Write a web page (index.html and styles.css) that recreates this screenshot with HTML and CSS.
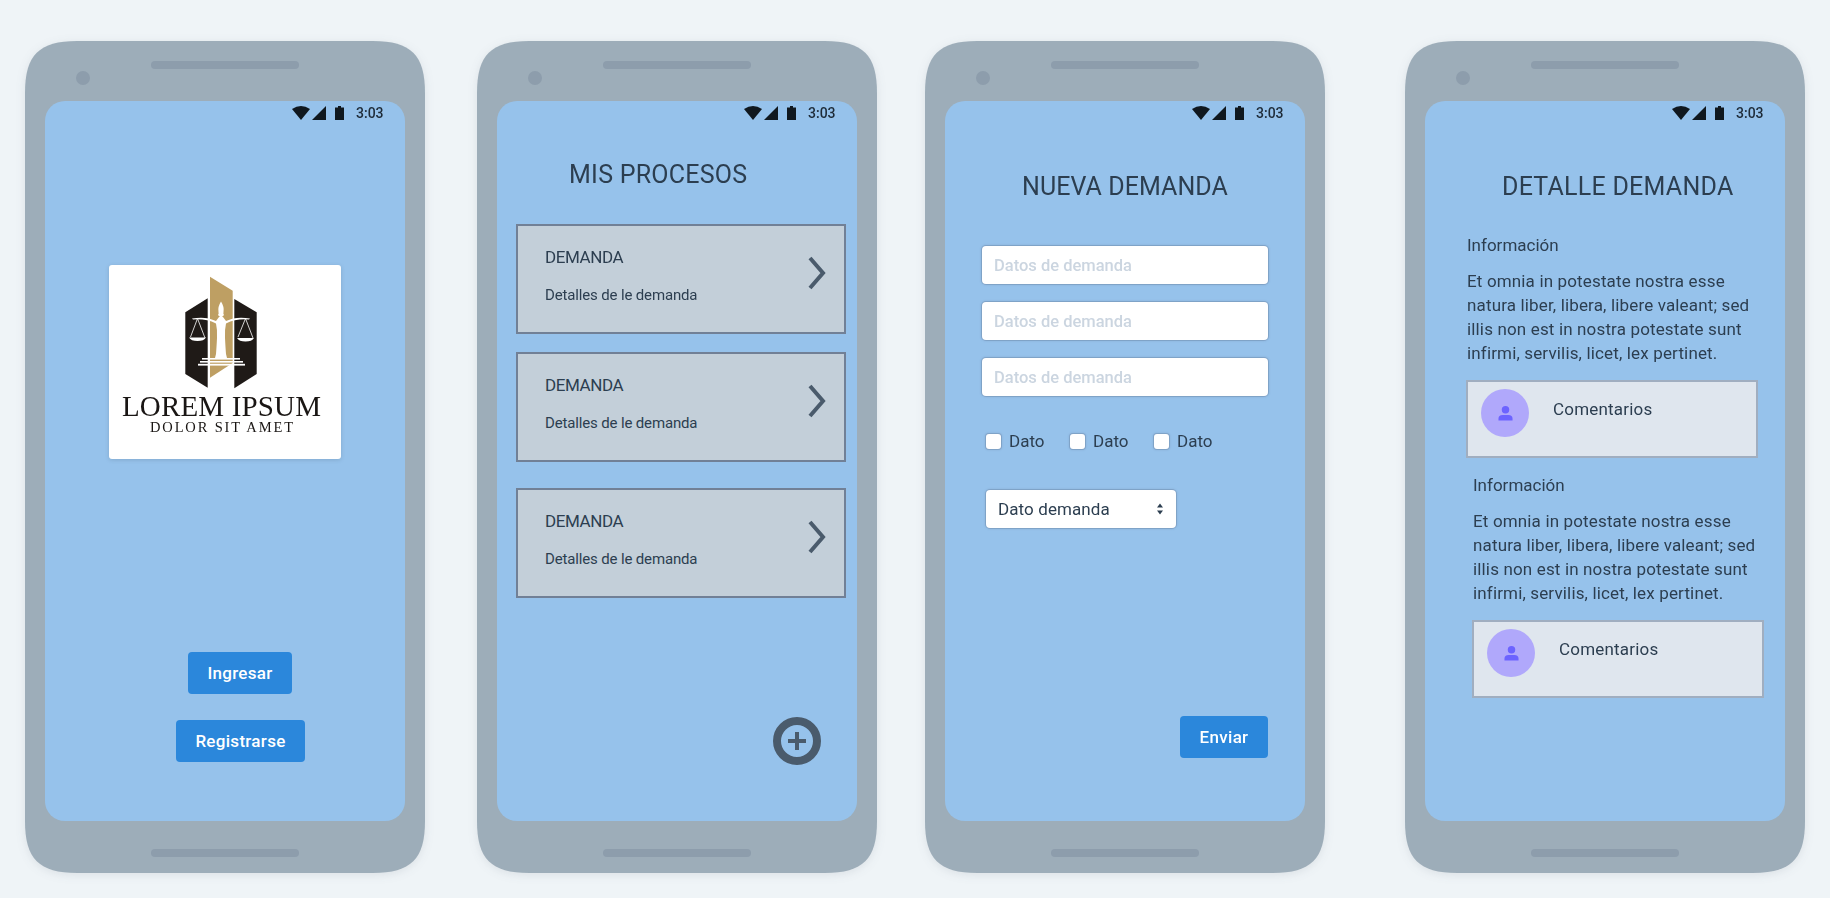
FILE: index.html
```html
<!DOCTYPE html>
<html lang="es">
<head>
<meta charset="utf-8">
<title>Procesos</title>
<link rel="stylesheet" href="styles.css">
</head>
<body>
<main class="board">

  <section class="shell shell-a"><div class="phone">
    <div class="bezel-top"><div class="speaker"></div><div class="camera"></div></div>
    <div class="screen">
      <div class="status">
        <svg class="ic-wifi" viewBox="0 0 18 14"><path d="M0 3Q9-3 18 3L9 14Z"/></svg>
        <svg class="ic-signal" viewBox="0 0 14 14"><path d="M14 0V14H0Z"/></svg>
        <svg class="ic-batt" viewBox="0 0 9 14"><path d="M3 0H6V1.5H9V14H0V1.5H3Z"/></svg>
        <span class="time">3:03</span>
      </div>
      <div class="logo-card">
        <svg class="logo" viewBox="109 265 232 194">
          <polygon class="gold" points="210,276.7 232.7,290.7 232.7,363 210,377.7"/>
          <polygon class="ink" points="207.7,298.3 185.3,312.3 185.3,374 207.7,387.7"/>
          <polygon class="ink" points="234.3,299 256.7,312.3 256.7,374 234.3,388.3"/>
          <path class="wht" d="M221 301.5Q224.5 307 223.5 312Q223 314 224 315L222 317H220L218 315Q219 314 218.5 312Q217.5 307 221 301.5Z"/>
          <path class="wht" d="M219 317H223L226 321Q236 316 250 318.5L249 319.5Q236 318.5 226 323.5Q224.5 330 225 338Q225.5 348 226 354L227 358H215L216 354Q216.5 348 217 338Q217.5 330 216 323.5Q206 318.5 193 319.5L192 318.5Q206 316 216 321Z"/>
          <rect class="wht" x="202" y="358" width="38" height="1.6"/>
          <rect class="wht" x="200" y="361" width="43" height="1.6"/>
          <rect class="wht" x="198" y="363.8" width="47" height="1.8"/>
          <path class="wht-line" d="M197.5 318.5L190.5 337M197.5 318.5L205 338"/>
          <path class="wht-line" d="M245.5 318.5L238 337M245.5 318.5L253 338"/>
          <path class="wht" d="M189 337.5H206Q204 341 197.5 341Q191 341 189 337.5Z"/>
          <path class="wht" d="M237 338H254Q252 341.5 245.5 341.5Q239 341.5 237 338Z"/>
          <text class="logo-big" x="122" y="416" textLength="199" lengthAdjust="spacing">LOREM IPSUM</text>
          <text class="logo-small" x="150" y="431.5" textLength="143" lengthAdjust="spacing">DOLOR SIT AMET</text>
        </svg>
      </div>
      <button class="btn btn-in" type="button">Ingresar</button>
      <button class="btn btn-reg" type="button">Registrarse</button>
    </div>
    <div class="bezel-bottom"><div class="speaker"></div></div>
  </div></section>

  <section class="shell shell-b"><div class="phone">
    <div class="bezel-top"><div class="speaker"></div><div class="camera"></div></div>
    <div class="screen">
      <div class="status">
        <svg class="ic-wifi" viewBox="0 0 18 14"><path d="M0 3Q9-3 18 3L9 14Z"/></svg>
        <svg class="ic-signal" viewBox="0 0 14 14"><path d="M14 0V14H0Z"/></svg>
        <svg class="ic-batt" viewBox="0 0 9 14"><path d="M3 0H6V1.5H9V14H0V1.5H3Z"/></svg>
        <span class="time">3:03</span>
      </div>
      <h1 class="title title-proc">MIS PROCESOS</h1>
      <article class="card card-1">
        <div class="card-text">
          <h2 class="card-title">DEMANDA</h2>
          <p class="card-sub">Detalles de le demanda</p>
        </div>
        <svg class="chev" viewBox="0 0 18 34"><path d="M2 2L15 17L2 32"/></svg>
      </article>
      <article class="card card-2">
        <div class="card-text">
          <h2 class="card-title">DEMANDA</h2>
          <p class="card-sub">Detalles de le demanda</p>
        </div>
        <svg class="chev" viewBox="0 0 18 34"><path d="M2 2L15 17L2 32"/></svg>
      </article>
      <article class="card card-3">
        <div class="card-text">
          <h2 class="card-title">DEMANDA</h2>
          <p class="card-sub">Detalles de le demanda</p>
        </div>
        <svg class="chev" viewBox="0 0 18 34"><path d="M2 2L15 17L2 32"/></svg>
      </article>
      <svg class="fab" viewBox="0 0 48 48"><circle cx="24" cy="24" r="20"/><path d="M24 15V33M15 24H33"/></svg>
    </div>
    <div class="bezel-bottom"><div class="speaker"></div></div>
  </div></section>

  <section class="shell shell-c"><div class="phone">
    <div class="bezel-top"><div class="speaker"></div><div class="camera"></div></div>
    <div class="screen">
      <div class="status">
        <svg class="ic-wifi" viewBox="0 0 18 14"><path d="M0 3Q9-3 18 3L9 14Z"/></svg>
        <svg class="ic-signal" viewBox="0 0 14 14"><path d="M14 0V14H0Z"/></svg>
        <svg class="ic-batt" viewBox="0 0 9 14"><path d="M3 0H6V1.5H9V14H0V1.5H3Z"/></svg>
        <span class="time">3:03</span>
      </div>
      <h1 class="title title-new">NUEVA DEMANDA</h1>
      <form class="form">
        <input class="field" type="text" placeholder="Datos de demanda">
        <input class="field" type="text" placeholder="Datos de demanda">
        <input class="field" type="text" placeholder="Datos de demanda">
        <div class="checks">
          <label class="check"><input class="box" type="checkbox"><span>Dato</span></label>
          <label class="check"><input class="box" type="checkbox"><span>Dato</span></label>
          <label class="check"><input class="box" type="checkbox"><span>Dato</span></label>
        </div>
        <div class="select-wrap">
          <select class="select"><option>Dato demanda</option></select>
          <svg class="select-arrows" viewBox="0 0 8 12"><path d="M4 0.5L7 4.5H1ZM4 11.5L1 7.5H7Z"/></svg>
        </div>
        <button class="btn btn-send" type="button">Enviar</button>
      </form>
    </div>
    <div class="bezel-bottom"><div class="speaker"></div></div>
  </div></section>

  <section class="shell shell-d"><div class="phone">
    <div class="bezel-top"><div class="speaker"></div><div class="camera"></div></div>
    <div class="screen">
      <div class="status">
        <svg class="ic-wifi" viewBox="0 0 18 14"><path d="M0 3Q9-3 18 3L9 14Z"/></svg>
        <svg class="ic-signal" viewBox="0 0 14 14"><path d="M14 0V14H0Z"/></svg>
        <svg class="ic-batt" viewBox="0 0 9 14"><path d="M3 0H6V1.5H9V14H0V1.5H3Z"/></svg>
        <span class="time">3:03</span>
      </div>
      <h1 class="title title-det">DETALLE DEMANDA</h1>
      <div class="info info-1">
        <h2 class="info-head">Información</h2>
        <p class="info-body">Et omnia in potestate nostra esse natura liber, libera, libere valeant; sed illis non est in nostra potestate sunt infirmi, servilis, licet, lex pertinet.</p>
        <div class="comment">
          <div class="avatar"><svg class="person" viewBox="0 0 16 16"><circle cx="8" cy="4.5" r="4"/><path d="M0.5 16V14Q0.5 10 5 10H11Q15.5 10 15.5 14V16Z"/></svg></div>
          <span class="comment-text">Comentarios</span>
        </div>
      </div>
      <div class="info info-2">
        <h2 class="info-head">Información</h2>
        <p class="info-body">Et omnia in potestate nostra esse natura liber, libera, libere valeant; sed illis non est in nostra potestate sunt infirmi, servilis, licet, lex pertinet.</p>
        <div class="comment">
          <div class="avatar"><svg class="person" viewBox="0 0 16 16"><circle cx="8" cy="4.5" r="4"/><path d="M0.5 16V14Q0.5 10 5 10H11Q15.5 10 15.5 14V16Z"/></svg></div>
          <span class="comment-text">Comentarios</span>
        </div>
      </div>
    </div>
    <div class="bezel-bottom"><div class="speaker"></div></div>
  </div></section>

</main>
</body>
</html>
```
FILE: styles.css
```css
* { box-sizing: border-box; }
html, body { margin: 0; padding: 0; height: 100%; }
body {
  background: #eff4f7;
  font-family: Roboto, "Liberation Sans", sans-serif;
  color: #2c3e50;
  overflow: hidden;
}
h1, h2, p { margin: 0; font-weight: 400; }

.board { display: flex; padding: 41px 0 0 25px; }
.shell { flex: none; filter: drop-shadow(0 2px 5px rgba(45, 60, 80, .10)); }
.shell-b { margin-left: 52px; }
.shell-c { margin-left: 48px; }
.shell-d { margin-left: 80px; }
.phone {
  width: 400px;
  height: 832px;
  background: #9dadb9;
  clip-path: path("M0 52C0 14 14 0 52 0H348C386 0 400 14 400 52V780C400 818 386 832 348 832H52C14 832 0 818 0 780Z");
  padding: 0 20px;
}

.bezel-top { height: 60px; padding-top: 20px; }
.bezel-bottom { height: 52px; padding-top: 28px; }
.speaker {
  width: 148px;
  height: 8px;
  margin: 0 auto;
  border-radius: 4px;
  background: #8d9dac;
}
.camera {
  width: 14px;
  height: 14px;
  margin: 2px 0 0 31px;
  border-radius: 50%;
  background: #8d9dac;
}
.screen {
  height: 720px;
  border-radius: 20px;
  background: #96c2eb;
  display: flex;
  flex-direction: column;
  align-items: flex-start;
}

.status {
  align-self: stretch;
  height: 19px;
  padding: 5px 22px 0 0;
  display: flex;
  justify-content: flex-end;
  align-items: flex-start;
  flex: none;
}
.status svg { fill: #10181f; display: block; flex: none; height: 14px; }
.ic-wifi { width: 18px; }
.ic-signal { width: 14px; margin-left: 2px; }
.ic-batt { width: 9px; margin-left: 9px; }
.time {
  margin-left: 12px;
  width: 27px;
  font-size: 14px;
  line-height: 14px;
  font-weight: 500;
  color: #1e2b38;
  white-space: nowrap;
}

.title {
  font-size: 25px;
  line-height: 32px;
  letter-spacing: .25px;
  color: #2c3e50;
  white-space: nowrap;
}
.title-proc { margin: 39px 0 0 72px; }
.title-new { margin: 51px 0 0 77px; letter-spacing: .07px; }
.title-det { margin: 51px 0 0 77px; }

/* Login */
.logo-card {
  width: 232px;
  height: 194px;
  margin: 145px 0 0 64px;
  background: #fff;
  border-radius: 3px;
  box-shadow: 0 1px 4px rgba(45, 60, 80, .18);
  flex: none;
}
.logo { display: block; width: 232px; height: 194px; }
.gold { fill: #be9f63; }
.ink { fill: #1f1a17; }
.wht { fill: #fff; }
.wht-line { fill: none; stroke: #fff; stroke-width: .8; }
.logo-big { font-family: "Liberation Serif", serif; font-size: 29px; fill: #1a1614; }
.logo-small { font-family: "Liberation Serif", serif; font-size: 14.5px; fill: #1a1614; }

.btn {
  height: 42px;
  padding: 0;
  border: 0;
  border-radius: 4px;
  background: #2b87db;
  color: #fff;
  font-family: inherit;
  font-size: 17px;
  font-weight: 500;
  letter-spacing: .3px;
  flex: none;
}
.btn-in { width: 104px; margin: 193px 0 0 143px; }
.btn-reg { width: 129px; margin: 26px 0 0 131px; }
.btn-send { width: 88px; margin: 188px 37px 0 0; align-self: flex-end; }

/* Lista */
.card {
  width: 330px;
  height: 110px;
  margin-left: 19px;
  border: 2px solid #718096;
  background: #c3cfd9;
  display: flex;
  justify-content: space-between;
  flex: none;
}
.card-1 { margin-top: 33px; }
.card-2 { margin-top: 18px; }
.card-3 { margin-top: 26px; }
.card-text { padding: 19px 0 0 27px; }
.card-title { font-size: 17px; line-height: 24px; letter-spacing: -.4px; color: #2c3e50; }
.card-sub { margin-top: 16px; font-size: 15px; line-height: 20px; letter-spacing: -.15px; color: #2c3e50; }
.chev {
  width: 18px;
  height: 34px;
  margin: 30px 18px 0 0;
  fill: none;
  stroke: #4a5b6c;
  stroke-width: 4;
}
.fab {
  width: 48px;
  height: 48px;
  margin: 119px 0 0 276px;
  fill: none;
  stroke: #4a5b6c;
  flex: none;
}
.fab circle { stroke-width: 8; }
.fab path { stroke-width: 4; }

/* Form */
.form { display: flex; flex-direction: column; align-self: stretch; align-items: flex-start; padding-top: 43px; flex: 1; }
.field {
  width: 286px;
  height: 38px;
  margin: 0 0 18px 37px;
  padding: 0 12px;
  border: 0;
  border-radius: 4px;
  box-shadow: 0 0 0 1px rgba(90, 110, 140, .22), 0 0 2px 1px rgba(90, 110, 140, .25);
  background: #fff;
  font-family: inherit;
  font-size: 16.5px;
  font-weight: 500;
  color: #2c3e50;
  flex: none;
}
.field::placeholder { color: #cbd5e0; opacity: 1; }
.checks { display: flex; height: 20px; margin: 17px 0 0 41px; align-items: center; }
.check { display: flex; align-items: center; width: 84px; font-size: 17px; color: #2c3e50; }
.box {
  appearance: none;
  width: 15px;
  height: 15px;
  margin: 0 8px 0 0;
  background: #fff;
  border-radius: 3px;
  box-shadow: 0 0 0 1px rgba(90, 110, 140, .22), 0 0 2px 1px rgba(90, 110, 140, .25);
}
.select-wrap { position: relative; margin: 39px 0 0 41px; width: 190px; height: 38px; flex: none; }
.select {
  appearance: none;
  display: block;
  width: 190px;
  height: 38px;
  padding: 0 12px;
  border: 0;
  border-radius: 4px;
  background: #fff;
  box-shadow: 0 0 0 1px rgba(90, 110, 140, .22), 0 0 2px 1px rgba(90, 110, 140, .25);
  font-family: inherit;
  font-size: 17px;
  letter-spacing: .1px;
  color: #2c3e50;
}
.select-arrows { position: absolute; left: 170px; top: 13px; width: 8px; height: 12px; fill: #2c3e50; pointer-events: none; }

/* Detalle */
.info { margin-left: 42px; width: 300px; flex: none; }
.info-1 { margin-top: 30px; }
.info-2 { margin-top: 15px; margin-left: 48px; }
.info-head { font-size: 17px; line-height: 24px; color: #2c3e50; }
.info-body { margin-top: 12px; font-size: 17px; line-height: 24px; letter-spacing: .15px; color: #2c3e50; }
.comment {
  width: 292px;
  height: 78px;
  margin: 15px 0 0 -1px;
  padding: 7px 13px;
  border: 2px solid #a0aec0;
  background: #dfe6ee;
  display: flex;
  align-items: flex-start;
}
.avatar {
  width: 48px;
  height: 48px;
  border-radius: 50%;
  background: #b0a8fb;
  display: flex;
  align-items: center;
  justify-content: center;
  flex: none;
}
.person { width: 15px; height: 16px; fill: #6c63ff; }
.comment-text { margin: 8px 0 0 24px; font-size: 17px; line-height: 24px; letter-spacing: .2px; color: #2c3e50; }
```
